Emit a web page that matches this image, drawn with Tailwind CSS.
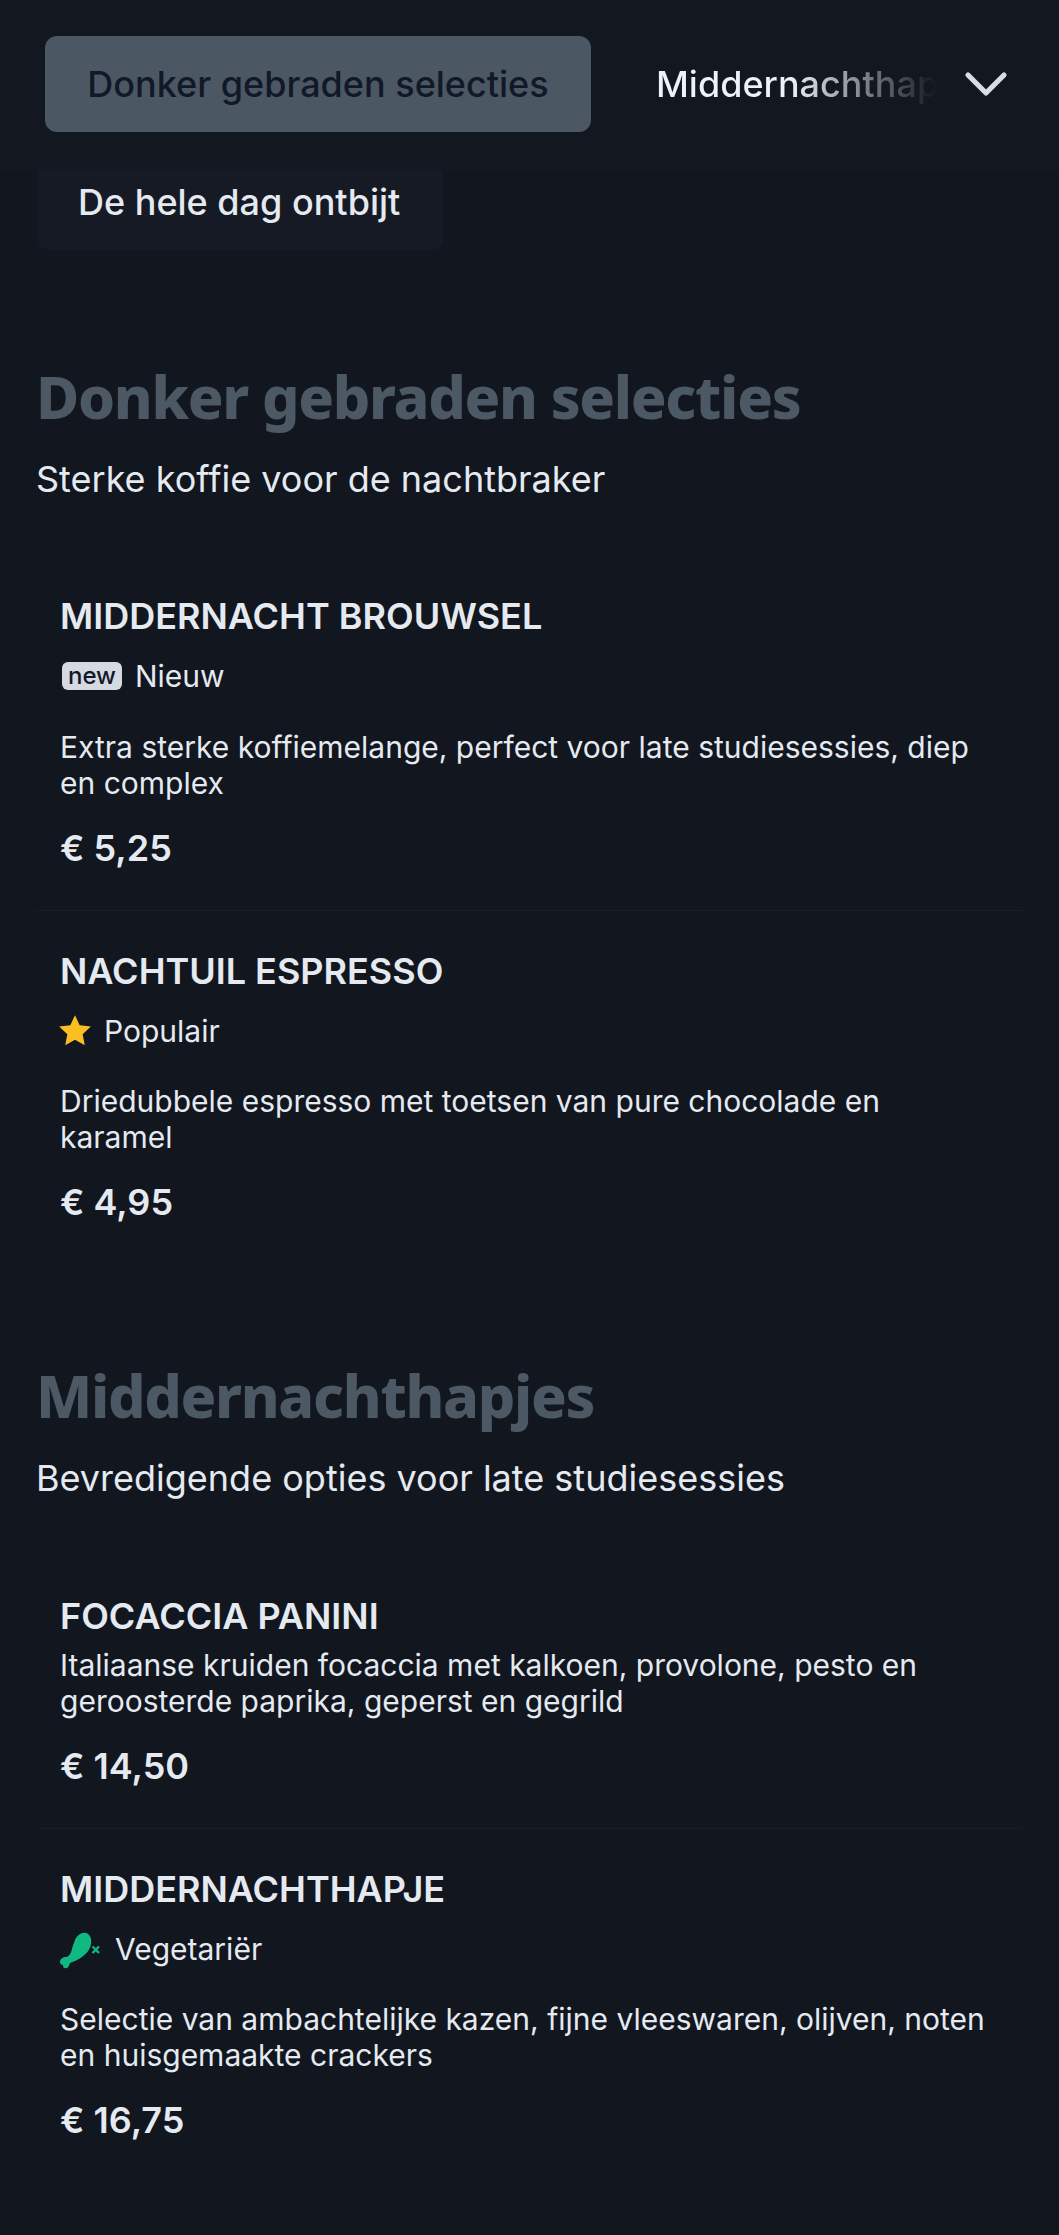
<!DOCTYPE html>
<html lang="nl">
  <head>
    <meta charset="UTF-8" />
    <meta name="viewport" content="width=device-width, initial-scale=1.0" />
    <title>Menu</title>
    <script src="https://cdn.jsdelivr.net/npm/@tailwindcss/browser@4"></script>
  </head>
  <body class="bg-[#11161f] font-['Inter',sans-serif] text-[#e5e9f0] h-[2235px] overflow-hidden">
    <!-- Categorie balk -->
    <div class="h-[170px] bg-[#121720] border-b border-[#151b25] flex items-center pl-[45px] relative z-10">
      <div class="w-[546px] h-[96px] rounded-[12px] bg-[#4b5763] flex items-center justify-center text-[#111827] text-[36px] font-medium shrink-0 mt-[-2px]">
        Donker gebraden selecties
      </div>
      <div class="w-[281px] ml-[65px] overflow-hidden whitespace-nowrap text-[36px] font-medium mt-[-2px] bg-gradient-to-r from-[#eef1f6] from-48% to-transparent to-[100%] bg-clip-text text-transparent">
        Middernachthapjes
      </div>
      <svg class="w-[48px] h-[48px] ml-[25px] text-[#d9dde3]" viewBox="0 0 24 24" fill="none" stroke="currentColor" stroke-width="2.6" stroke-linecap="round" stroke-linejoin="round">
        <path d="M3 7l9 9 9-9" />
      </svg>
    </div>
    <div class="w-[405px] h-[96px] ml-[38px] -mt-[16px] bg-[#151a24] rounded-b-[10px] flex items-center pl-[40px] text-[36px] font-medium">
      De hele dag ontbijt
    </div>

    <main class="px-[36px]">
      <!-- Donker gebraden -->
      <section class="pt-[111px]">
        <h2 class="font-['Noto_Sans',sans-serif] font-extrabold text-[59px] tracking-[-1.3px] leading-[70px] text-[#4d5865]">Donker gebraden selecties</h2>
        <p class="text-[36px] leading-[48px] mt-[24px]">Sterke koffie voor de nachtbraker</p>
        <div class="mt-[62px]">
          <article class="px-[24px] pt-[27px] pb-[38px] border-b border-[#181e28]">
            <h3 class="text-[36px] leading-[48px] font-semibold">MIDDERNACHT BROUWSEL</h3>
            <div class="flex items-center mt-[12px] h-[48px]">
              <span class="ml-[2px] w-[60px] h-[28px] rounded-[6px] bg-[#d5d9e1] text-[#111827] text-[24px] font-medium flex items-center justify-center">new</span>
              <span class="ml-[13px] text-[30px]">Nieuw</span>
            </div>
            <p class="text-[30px] leading-[36px] mt-[29px]">Extra sterke koffiemelange, perfect voor late studiesessies, diep en complex</p>
            <p class="text-[36px] leading-[48px] font-semibold mt-[23px]">€ 5,25</p>
          </article>
          <article class="px-[24px] pt-[36px] pb-[41px]">
            <h3 class="text-[36px] leading-[48px] font-semibold">NACHTUIL ESPRESSO</h3>
            <div class="flex items-center mt-[12px] h-[48px]">
              <svg class="w-[34px] h-[34px] text-[#fbbf24] ml-[-2px]" viewBox="0 0 24 24" fill="currentColor"><path d="M12 .8l3.3 7.2 7.9.9-5.8 5.4 1.5 7.8L12 18.2l-6.9 3.9 1.5-7.8L.8 8.9l7.9-.9z" /></svg>
              <span class="ml-[12px] text-[30px]">Populair</span>
            </div>
            <p class="text-[30px] leading-[36px] mt-[28px]">Driedubbele espresso met toetsen van pure chocolade en karamel</p>
            <p class="text-[36px] leading-[48px] font-semibold mt-[23px]">€ 4,95</p>
          </article>
        </div>
      </section>

      <!-- Middernachthapjes -->
      <section class="pt-[93px]">
        <h2 class="font-['Noto_Sans',sans-serif] font-extrabold text-[59px] tracking-[-1.3px] leading-[70px] text-[#4d5865]">Middernachthapjes</h2>
        <p class="text-[36px] leading-[48px] mt-[24px]">Bevredigende opties voor late studiesessies</p>
        <div class="mt-[63px]">
          <article class="px-[24px] pt-[27px] pb-[38px] border-b border-[#181e28]">
            <h3 class="text-[36px] leading-[48px] font-semibold">FOCACCIA PANINI</h3>
            <p class="text-[30px] leading-[36px] mt-[7px]">Italiaanse kruiden focaccia met kalkoen, provolone, pesto en geroosterde paprika, geperst en gegrild</p>
            <p class="text-[36px] leading-[48px] font-semibold mt-[23px]">€ 14,50</p>
          </article>
          <article class="px-[24px] pt-[36px] pb-[41px]">
            <h3 class="text-[36px] leading-[48px] font-semibold">MIDDERNACHTHAPJE</h3>
            <div class="flex items-center mt-[12px] h-[48px]">
              <svg class="w-[50px] h-[45px] ml-[-5px]" viewBox="0 0 50 45">
                <path fill="#10b981" d="M20 13C22 8 27 5 31 6C35 7 37 12 36 17C35 23 31 27 27 30C23 33 18 35 15 36C14 40 12 42 10 41C8 41 8 39 8 38C6 38 5 36 5 35C5 32 8 30 11 30C14 30 16 26 17 22C18 18 19 16 20 13Z" />
                <path stroke="#10b981" stroke-width="2.4" d="M37.5 19.5l6.5 6.5m0-6.5l-6.5 6.5" />
              </svg>
              <span class="ml-[10px] text-[30px]">Vegetariër</span>
            </div>
            <p class="text-[30px] leading-[36px] mt-[28px]">Selectie van ambachtelijke kazen, fijne vleeswaren, olijven, noten en huisgemaakte crackers</p>
            <p class="text-[36px] leading-[48px] font-semibold mt-[23px]">€ 16,75</p>
          </article>
        </div>
      </section>
    </main>
  </body>
</html>
